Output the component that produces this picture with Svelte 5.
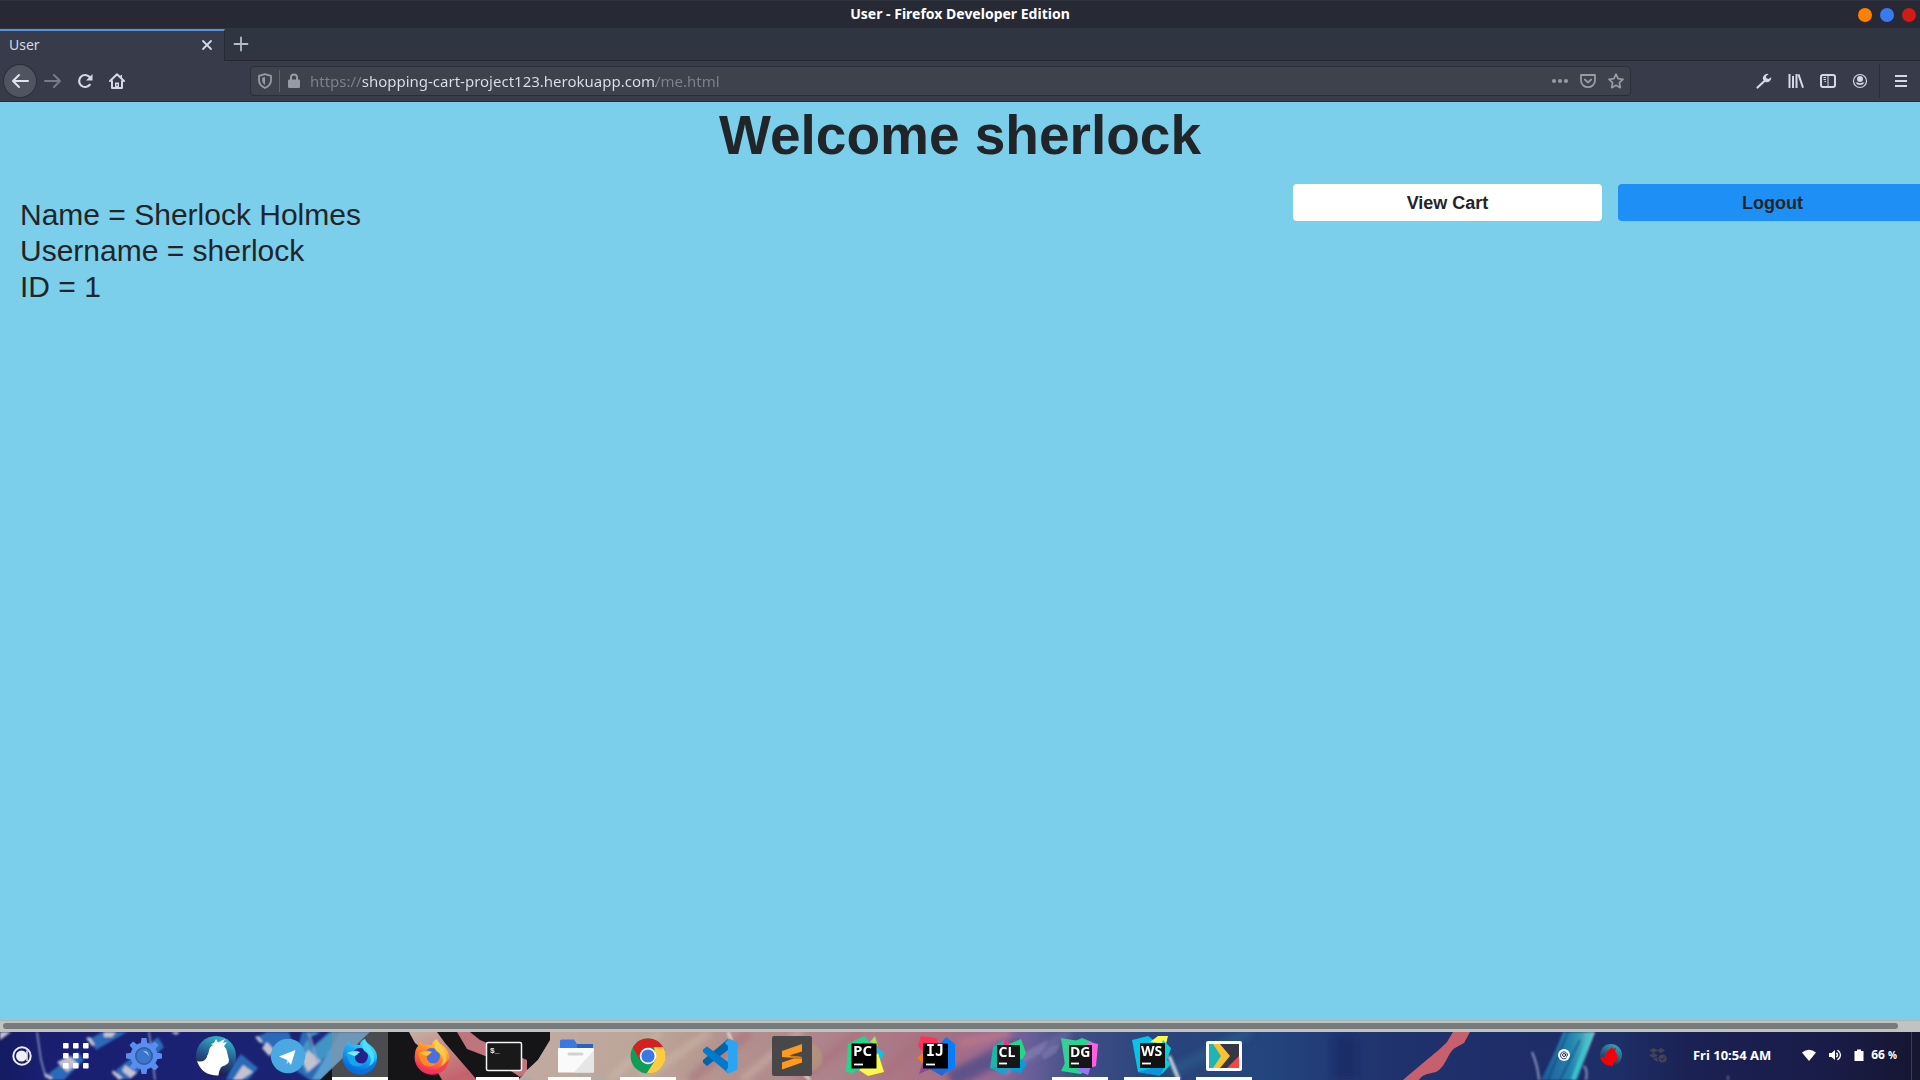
<script>
  let url = $state('https://shopping-cart-project123.herokuapp.com/me.html');

  const user = { name: 'Sherlock Holmes', username: 'sherlock', id: 1 };

  const apps = [
    { id: 'settings', label: 'Settings' },
    { id: 'duck', label: 'Cyberduck' },
    { id: 'telegram', label: 'Telegram' },
    { id: 'firefox-dev', label: 'Firefox Developer Edition', active: true, running: 'one' },
    { id: 'firefox', label: 'Firefox' },
    { id: 'terminal', label: 'Terminal', running: 'many' },
    { id: 'files', label: 'Files', running: 'many' },
    { id: 'chrome', label: 'Chrome', running: 'one' },
    { id: 'code', label: 'Visual Studio Code' },
    { id: 'sublime', label: 'Sublime Text' },
    { id: 'pycharm', label: 'PyCharm' },
    { id: 'idea', label: 'IntelliJ IDEA' },
    { id: 'clion', label: 'CLion' },
    { id: 'datagrip', label: 'DataGrip', running: 'one' },
    { id: 'webstorm', label: 'WebStorm', running: 'one' },
    { id: 'player', label: 'Player', running: 'one' }
  ];
</script>

<div class="screen">
  <header class="titlebar">
    <span class="window-title">User - Firefox Developer Edition</span>
    <div class="window-buttons">
      <button class="dot orange" aria-label="Minimize"></button>
      <button class="dot blue" aria-label="Maximize"></button>
      <button class="dot red" aria-label="Close window"></button>
    </div>
  </header>

  <div class="tabs">
    <div class="tab">
      <span>User</span>
      <button class="icon close" aria-label="Close tab">
        <svg width="12" height="12" viewBox="0 0 12 12"><path d="M2 2l8 8M10 2l-8 8" stroke="#d3dae3" stroke-width="1.8" stroke-linecap="round" /></svg>
      </button>
    </div>
    <button class="icon new-tab" aria-label="New tab">
      <svg width="16" height="16" viewBox="0 0 16 16"><path d="M8 1.5v13M1.5 8h13" stroke="#b4bccb" stroke-width="1.8" stroke-linecap="round" /></svg>
    </button>
  </div>

  <nav class="toolbar" aria-label="Browser toolbar">
    <div class="nav-left">
      <button class="icon back" aria-label="Back">
        <svg width="18" height="16" viewBox="0 0 18 16"><path d="M8 2L2 8l6 6M2 8h15" fill="none" stroke="#dfe3ec" stroke-width="2" stroke-linecap="round" stroke-linejoin="round" /></svg>
      </button>
      <button class="icon" aria-label="Forward">
        <svg width="18" height="16" viewBox="0 0 18 16"><path d="M10 2l6 6-6 6M16 8H1" fill="none" stroke="#767b89" stroke-width="2" stroke-linecap="round" stroke-linejoin="round" /></svg>
      </button>
      <button class="icon" aria-label="Reload">
        <svg width="16" height="16" viewBox="0 0 16 16"><path d="M12.8 11.8A6 6 0 1 1 12.6 4" fill="none" stroke="#d3dae3" stroke-width="2.2" stroke-linecap="round" /><path d="M15.5 1v6.5H9z" fill="#d3dae3" /></svg>
      </button>
      <button class="icon" aria-label="Home">
        <svg width="16" height="16" viewBox="0 0 16 16"><path d="M1 8l7-6.8L15 8M3 8v7h10V8" fill="none" stroke="#d3dae3" stroke-width="2" stroke-linecap="round" stroke-linejoin="round" /><path d="M6 15v-5.5h4V15" fill="#d3dae3" /><path d="M8 11v2" stroke="#383c4a" /><path d="M11.5 2h1.5v3h-1.5z" fill="#d3dae3" /></svg>
      </button>
    </div>

    <div class="urlbar">
      <svg width="14" height="16" viewBox="0 0 14 16"><path d="M7 1.2L13 2.8V7c0 4-2.5 6.500-6 8C3.500 13.500 1 11 1 7V2.800z" fill="none" stroke="#969ba6" stroke-width="1.800" stroke-linejoin="round" /><path d="M7 4L4.200 4.800V7c0 2 1 3.800 2.800 5z" fill="#969ba6" /></svg>
      <span class="split"></span>
      <svg class="lock" width="12" height="16" viewBox="0 0 12 16"><path d="M3 7V4.500a3 3 0 0 1 6 0V7" fill="none" stroke="#969ba6" stroke-width="2" /><rect y="6.500" width="12" height="8.500" rx="1.200" fill="#969ba6" /></svg>
      <input type="text" aria-label="Address" bind:value={url} spellcheck="false" />
      <div class="url-actions">
        <button class="icon" aria-label="Page actions">
          <svg width="16" height="16" viewBox="0 0 16 16" fill="#969ba6"><circle cx="2" cy="8" r="2" /><circle cx="8" cy="8" r="2" /><circle cx="14" cy="8" r="2" /></svg>
        </button>
        <button class="icon" aria-label="Save to Pocket">
          <svg width="16" height="16" viewBox="0 0 16 16" fill="none" stroke="#969ba6" stroke-width="1.800" stroke-linecap="round" stroke-linejoin="round"><path d="M1 2h14v5.500a7 6.700 0 0 1-14 0z" /><path d="M4.800 6.500L8 9.500l3.200-3" /></svg>
        </button>
        <button class="icon" aria-label="Bookmark page">
          <svg width="16" height="16" viewBox="0 0 16 16"><path d="M8 1.200l2.100 4.500 4.900.600-3.600 3.400.9 5L8 12.300 3.700 14.700l.9-5L1 6.300l4.900-.6z" fill="none" stroke="#969ba6" stroke-width="1.700" stroke-linejoin="round" /></svg>
        </button>
      </div>
    </div>

    <div class="nav-right">
      <button class="icon" aria-label="Developer tools">
        <svg width="16" height="16" viewBox="0 0 16 16"><path d="M1.500 14.500l7.500-7" stroke="#d3dae3" stroke-width="2.200" stroke-linecap="round" /><path d="M12.500 1A4.500 4.500 0 0 0 7 6.500L9.500 9a4.500 4.500 0 0 0 5.800-4.800L12.500 6 10.300 5.300 10 3.200z" fill="#d3dae3" /></svg>
      </button>
      <button class="icon" aria-label="Library">
        <svg width="16" height="16" viewBox="0 0 16 16" stroke="#d3dae3" stroke-width="2"><path d="M1.500 1v14M8.500 1v14M10.500 1.400l4.500 13.300" /><path d="M5 3v12" /></svg>
      </button>
      <button class="icon" aria-label="Sidebars">
        <svg width="16" height="16" viewBox="0 0 16 16"><rect x="1" y="2" width="14" height="12" rx="2" fill="none" stroke="#d3dae3" stroke-width="2" /><path d="M8 2v12" stroke="#d3dae3" /><path d="M3.500 4.500H6M3.500 6.500H6M4.500 8.500H6" stroke="#d3dae3" /></svg>
      </button>
      <button class="icon" aria-label="Account">
        <svg width="16" height="16" viewBox="0 0 16 16"><circle cx="8" cy="8" r="6.500" fill="none" stroke="#d3dae3" stroke-width="1.200" /><circle cx="8" cy="6" r="3" fill="#d3dae3" /><path d="M3.500 9.500h2.200a4 4 0 0 0 4.600 0h2.200a5 4.500 0 0 1-9 0z" fill="#d3dae3" /></svg>
      </button>
      <span class="bar-line"></span>
      <button class="icon" aria-label="Menu">
        <svg width="12" height="16" viewBox="0 0 12 16"><path d="M0 3h12M0 8h12M0 13h12" stroke="#d3dae3" stroke-width="2" /></svg>
      </button>
    </div>
  </nav>

  <main class="page">
    <h1>Welcome sherlock</h1>
    <div class="page-row">
      <section class="details">
        <div>Name = {user.name}</div>
        <div>Username = {user.username}</div>
        <div>ID = {user.id}</div>
      </section>
      <div class="actions">
        <button class="action cart">View Cart</button>
        <button class="action logout">Logout</button>
      </div>
    </div>
  </main>

  <div class="scroll"><div class="thumb"></div></div>

  <footer class="taskbar">
    <svg class="wallpaper" viewBox="0 0 1920 48" preserveAspectRatio="none" aria-hidden="true">
      <defs>
        <linearGradient id="sky" gradientUnits="userSpaceOnUse" x1="0" y1="0" x2="1920" y2="0">
          <stop offset="0" stop-color="#151b60" /><stop offset=".02" stop-color="#191e70" /><stop offset=".17" stop-color="#1b2474" />
          <stop offset=".28" stop-color="#bfaaa0" /><stop offset=".34" stop-color="#bca498" /><stop offset=".38" stop-color="#b4928f" />
          <stop offset=".44" stop-color="#ad808a" /><stop offset=".49" stop-color="#aa7082" /><stop offset=".515" stop-color="#9a6a92" />
          <stop offset=".535" stop-color="#6c609a" /><stop offset=".56" stop-color="#414f86" /><stop offset=".6" stop-color="#2b447c" />
          <stop offset=".66" stop-color="#23457e" /><stop offset=".72" stop-color="#20336e" /><stop offset=".8" stop-color="#1e2c68" />
          <stop offset=".84" stop-color="#1e2f68" /><stop offset=".88" stop-color="#1b2153" /><stop offset=".95" stop-color="#191c48" /><stop offset="1" stop-color="#161631" />
        </linearGradient>
        <linearGradient id="ribbon" x1="0" y1="0" x2=".6" y2="1"><stop offset="0" stop-color="#c5b1a4" /><stop offset=".5" stop-color="#c48b88" /><stop offset="1" stop-color="#c4636d" /></linearGradient>
        <linearGradient id="teal" x1="0" y1="0" x2="1" y2="0"><stop offset="0" stop-color="#1d5a9a" /><stop offset=".55" stop-color="#2384ae" /><stop offset=".75" stop-color="#3aa0b8" /><stop offset="1" stop-color="#a9cfc8" /></linearGradient>
        <filter id="soft" x="-5%" y="-20%" width="110%" height="140%"><feGaussianBlur stdDeviation=".8" /></filter>
        <filter id="haze" x="-5%" y="-50%" width="110%" height="200%"><feGaussianBlur stdDeviation="3" /></filter>
      </defs>
      <rect width="1920" height="48" fill="url(#sky)" />

      <g filter="url(#soft)">
        <g fill="#2a6ab8">
          <path d="M49 41L78 20l6 8-20 20H52zM90 7l12-7h25L96 18zM116 38l42-33 6 10-34 32h-10zM233 32l8-10 17 14-10 12h-22zM257 5l10-5h22l6 20-18 8zM302 0h72L322 48h-12l-18-12z" />
        </g>
        <path d="M312 0h40l-46 42-8-20z" fill="#3f94c6" />
        <path d="M340 0h30L320 48h-8z" fill="#5a9dcf" />
        <path d="M308 6l12-6h10l-18 16z" fill="#1f2b84" />
        <g fill="#c3c3d0">
          <path d="M0 0h11L0 8zM44 40l9 6-3 2-6-5zM57 30l13-6 8 8-11 8zM86 6l4-1 5 8-3 1zM104 0h12l-4 5h-8zM113 38l10 8-4 2-7-7zM125 33l12 8-6 5-9-7zM171 0h9l-4 3zM243 33l10 7-12 8h-8zM255 5l3-1 5 6-3 1zM267 10l8 9-6 5-7-8zM308 18l13 11-13 11-6-12z" />
        </g>
        <path d="M37 0l4 28 5 18M149 0l6 48M308 0l10 30" fill="none" stroke="#8f9cc4" stroke-width="1.500" />
      </g>

      <path d="M370 0h180v8l-12 20-20 20H320z" fill="#151517" />
      <path d="M409 0h28l8 11 32 37h-35l-15-27-12-10z" fill="url(#ribbon)" />
      <path d="M457 0h13l10 8 47 20v12l-7 5-27-18-26-10z" fill="#c0747c" />
      <path d="M550 0v9l-12 19-11 10-8 10h60V0z" fill="#c0aaa0" />
      <g filter="url(#haze)" fill="none">
        <path d="M610 48l50-48M640 48l70-48M742 48l60-50" stroke="#d2bfae" stroke-width="7" opacity=".5" />
        <path d="M690 48l60-48M800 48l60-48M880 48l50-48" stroke="#a96f7c" stroke-width="10" opacity=".6" />
        <path d="M950 48l70-34" stroke="#4a4a88" stroke-width="18" opacity=".75" />
        <path d="M960 12l50-12" stroke="#c07a86" stroke-width="10" opacity=".7" />
        <path d="M1000 44l70-44" stroke="#8079b0" stroke-width="7" opacity=".5" />
        <path d="M1170 40l80-40" stroke="#2d6792" stroke-width="12" opacity=".4" />
        <path d="M1345 4v44" stroke="#192560" stroke-width="24" opacity=".5" />
      </g>
      <g filter="url(#soft)">
        <path d="M1002 36l10-5 8-8 12-7 16-8-6 12-18 10-18 14zM1042 22l10-8 8-2-4 9-12 7z" fill="#8e87bd" opacity=".45" />
        <path d="M806 10q14 2 16 14t-12 16z" fill="#b2997c" opacity=".7" />
        <path d="M728 0l4 10M804 42l6 6" stroke="#ded0d0" stroke-width="3" />
        <path d="M1169 24l10 24" stroke="#b9c6d4" stroke-width="4" />
      </g>
      <path d="M1403 48c22-19 39-32 44-38l6-10h17l-6 11-9 5c-7 4-9 19-19 24-10 2-14 3-17 8z" fill="#c65f6e" />
      <g filter="url(#soft)">
        <path d="M1541 48c10-20 16-32 22-48h32l-18 48z" fill="url(#teal)" />
        <path d="M1573 48l18-48" stroke="#39c6d0" stroke-width="4" />
        <path d="M1548 48l20-48M1560 48l20-40" stroke="#174a88" stroke-width="2" opacity=".7" />
        <path d="M1532 20q6 14 7 28M1586 48q2-10-2-14" fill="none" stroke="#8b93b8" stroke-width="2" />
        <path d="M1728 44v4" stroke="#a6a8c4" stroke-width="1" />
      </g>
    </svg>

    <div class="launchers">
      <button class="icon start" aria-label="Activities">
        <svg width="20" height="20" viewBox="0 0 20 20" fill="none" stroke="#f1f1f4"><circle cx="10" cy="10" r="8.700" stroke-width="2" /><circle cx="9.500" cy="10" r="5.500" fill="#f1f1f4" stroke="none" /><path d="M15 4.500v10.500" stroke-width="1.500" /></svg>
      </button>
      <button class="icon grid-btn" aria-label="Show applications">
        <svg width="26" height="26" viewBox="0 0 26 26" fill="#fff">
          {#each [0, 10, 20] as y}{#each [0, 10, 20] as x}<rect {x} {y} width="5.600" height="5.600" rx=".8" />{/each}{/each}
        </svg>
      </button>
    </div>

    <div class="apps">
      {#each apps as app}
        <button class="app" class:active={app.active} aria-label={app.label}>
          <svg width="40" height="40" viewBox="0 0 40 40">
            {#if app.id === 'settings'}
              <g fill="#5b8def">
                {#each [0, 45, 90, 135, 180, 225, 270, 315] as a}<path d="M16.800 7L17.500 2h5l.7 5z" transform="rotate({a} 20 20)" />{/each}
                <circle cx="20" cy="20" r="13.500" />
              </g>
              <circle cx="20" cy="20" r="9" fill="#2c5ca8" /><circle cx="20" cy="20" r="7.500" fill="#3a77cc" /><path d="M19 15.500q5-1 6 5-2-4-6-5z" fill="#b9dcf5" />
            {:else if app.id === 'duck'}
              <defs><linearGradient id="dk" x1=".6" y1="0" x2=".3" y2="1"><stop offset="0" stop-color="#33b8cc" /><stop offset=".5" stop-color="#24558a" /><stop offset="1" stop-color="#200f35" /></linearGradient></defs>
              <circle cx="20" cy="20" r="20" fill="url(#dk)" />
              <path d="M1 25q7 2 10-4c0-2 1-2 1.500-4Q13 11 17 9l-2-1 3-1 2-4 2 3.500L29 3l-2 4 4-1-3 4q3 3 3 6l2 8q0 3-2 4-2 2-4 2-4 2-4.500 9.500Q6 40 1 25z" fill="#fff" />
            {:else if app.id === 'telegram'}
              <circle cx="20" cy="20" r="17.300" fill="#4aa8e2" /><path d="M11 20.500L27.500 14 23 29l-4-5z" fill="#fff" /><path d="M19 24l-.5 4.500 2-2.500z" fill="#c7dcea" />
            {:else if app.id === 'firefox-dev' || app.id === 'firefox'}
              {@const dev = app.id === 'firefox-dev'}
              <defs>
                <linearGradient id="{app.id}-b" x1=".8" y1="0" x2=".3" y2="1"><stop offset="0" stop-color={dev ? '#4ff0ff' : '#ffe14a'} /><stop offset=".45" stop-color={dev ? '#1ba8f5' : '#ff8a2b'} /><stop offset="1" stop-color={dev ? '#0560d8' : '#f0245e'} /></linearGradient>
              </defs>
              <path d="M6 10c1-1 1-3 2-5l4 4c3-1 6 0 8 0 0-3 2-5 5-6 1 5 8 6 11 13 4 11-4 22-16 22C8 38 1 28 3 18c0-3 1-6 3-8z" fill="url(#{app.id}-b)" />
              <circle cx="20" cy="20" r="8" fill={dev ? '#26208a' : '#4a6fe0'} />
              <path d="M6 17c4-3 9-3 14-1-2 1-3 3-5 4-1 5 4 9 10 7-5 6-15 4-17-4z" fill={dev ? '#15a5f0' : '#ff8a1f'} />
              <path d="M7 17c4-2 9-2 13-1-2 1-3 4-6 4z" fill={dev ? '#7beaff' : '#ffbd3d'} />
              <path d="M25 3c1 6 8 9 9 16 1 5-1 9-5 11 4-6 1-11-2-13-4-2-7-7-2-14z" fill={dev ? '#4be4fb' : '#ffd242'} opacity=".85" />
              <path d="M4 25c5 10 22 14 33-2-2 21-30 21-33 2z" fill={dev ? '#0a6cd6' : '#f22f5c'} opacity=".7" />
            {:else if app.id === 'terminal'}
              <rect x="2.500" y="6.500" width="35" height="28" rx="1.500" fill="#191919" stroke="#f4f4f4" stroke-width="1.500" />
              <text x="6" y="17" class="prompt">$_</text>
            {:else if app.id === 'files'}
              <path d="M4 5q0-1.500 1.500-1.500H18l3 4.500h16v6H4z" fill="#3b78e7" /><path d="M21 8h16v5H21z" fill="#2a62c4" />
              <rect x="2" y="12" width="36" height="24.500" rx="1" fill="#fafafa" /><path d="M38 14v22.500H18z" fill="#e6e6e6" /><rect x="11.500" y="16.500" width="16" height="3" rx="1.500" fill="#d2d2d2" />
            {:else if app.id === 'chrome'}
              <circle cx="20" cy="20" r="17.500" fill="#0f9d58" />
              <path d="M4.800 11.300A17.500 17.500 0 0 1 35.200 11.300H20L12 24z" fill="#d81f1f" />
              <path d="M35.200 11.300A17.500 17.500 0 0 1 18.500 37.500L28 23 26 11.300z" fill="#ffcb42" />
              <circle cx="20" cy="20" r="8.300" fill="#fff" /><circle cx="20" cy="20" r="6.600" fill="#3b78e7" />
            {:else if app.id === 'code'}
              <path d="M28 3v11L7 30l-4-3.500V24z" fill="#0065a9" /><path d="M28 37V26L7 10.500 3 13.500V16z" fill="#007acc" />
              <path d="M29 2.500l8.500 4v27L29 37.500l-3-3 2-3V10l-3-3z" fill="#2aa5f3" />
            {:else if app.id === 'sublime'}
              <rect width="40" height="40" rx="2" fill="#484848" />
              <path d="M10 15l20-7v7.500l-13 4 13 1.500v5.500L10 33.500v-7l13-4.500-13-1z" fill="#ff9a1f" /><path d="M17 19.500l13 1.500v2l-7 0z" fill="#d97708" />
            {:else if app.id === 'pycharm'}
              <path d="M4 8l16-8 8 8-12 26-14 2z" fill="#21d789" /><path d="M26 6l5-6 3 10z" fill="#a7e35a" /><path d="M31 10l9 7-4 8z" fill="#07c3f2" /><path d="M34 17l6 19-16 4-9-6z" fill="#fcf84a" /><path d="M0 34l8 4 6-5z" fill="#21d789" />
              <rect x="7.500" y="7.500" width="25" height="25" /><text x="9" y="20" class="ide">PC</text><path d="M10 28.500h9" stroke="#fff" stroke-width="1.800" />
            {:else if app.id === 'idea'}
              <path d="M5 0l15 2 4 8-16 8-6-8z" fill="#fe315d" /><path d="M1 22l7-6v12z" fill="#f97a12" /><path d="M24 8l6-7 9 7v24l-13 7-10-5z" fill="#087cfa" /><path d="M7 26L3 38l14-6z" fill="#8e479b" /><path d="M12 32l14 8 6-8z" fill="#2567d8" />
              <rect x="7" y="7.500" width="25" height="25" /><text x="10" y="20" class="ide mono">IJ</text><path d="M10 28.500h9" stroke="#fff" stroke-width="1.800" />
            {:else if app.id === 'clion'}
              <path d="M5 11l12-8 8 8-10 26L2 32z" fill="#17b8a6" /><path d="M16 3l6 4-2 5h-4z" fill="#ed358c" /><path d="M21 8l12-5 5 14-6 10z" fill="#21d789" /><path d="M31 22l8 5-6 10-12-3z" fill="#079ed8" /><path d="M3 31l12 8 8-8z" fill="#1aa2c9" />
              <rect x="9" y="9" width="23" height="23" fill="#161616" /><text x="10.500" y="20.500" class="ide small">CL</text><path d="M11 27.500h8" stroke="#fff" stroke-width="1.800" />
            {:else if app.id === 'datagrip'}
              <path d="M1 2l18 3 2 26-16-2z" fill="#33cf96" /><path d="M8 8l14-6 10 4-4 8z" fill="#22d88f" /><path d="M30 6l8 2-2 22-6 2-10-20z" fill="#ff5fe3" /><path d="M5 27l-4 8 20 3 8-8z" fill="#22d88f" /><path d="M16 34l12 5 4-12z" fill="#9775f8" />
              <rect x="9" y="9" width="23" height="23" fill="#161616" /><text x="10" y="20.500" class="ide small">DG</text><path d="M11 27.500h8" stroke="#fff" stroke-width="1.800" />
            {:else if app.id === 'webstorm'}
              <path d="M0 4l16-4 8 6-6 32-12-2z" fill="#07c3e8" /><path d="M18 6l8-6h10l-2 8z" fill="#fcf84a" /><path d="M31 4l8 8-4 12 4 4-9 10-8-8z" fill="#08cdd7" /><path d="M6 36l22 4 6-12z" fill="#0a94dc" />
              <rect x="8" y="7" width="25" height="25" fill="#111" /><text x="9" y="20" class="ide small">WS</text><path d="M10 27.500h9" stroke="#fff" stroke-width="1.800" />
            {:else}
              <rect x="2" y="5" width="36" height="30" rx="2" fill="#fff" /><path d="M5 8h9l7 12-7 12H5z" fill="#1fb5b8" /><path d="M14 8h21v24H14l7-12z" fill="#343746" /><path d="M35 20v12H23z" fill="#fa4343" /><path d="M9 8h7l10 12-10 12H9l8-12z" fill="#fcc12f" />
            {/if}
          </svg>
          {#if app.running}<span class="marks"><i></i>{#if app.running === 'many'}<i class="more"></i>{/if}</span>{/if}
        </button>
      {/each}
    </div>

    <div class="tray">
      <svg width="12" height="12" viewBox="0 0 12 12"><circle cx="6" cy="6" r="6" fill="#fff" /><path d="M8.500 8.800A3.500 3.500 0 1 1 9.500 6c0 1.600-1.800 1.800-1.800.4V4.500" fill="none" stroke="#26385a" /><circle cx="6" cy="6" r="1.500" fill="none" stroke="#26385a" /></svg>
      <svg class="bird" width="22" height="22" viewBox="0 0 22 22">
        <defs><linearGradient id="bd" x1=".7" y1="0" x2=".2" y2="1"><stop offset="0" stop-color="#31a3ba" /><stop offset="1" stop-color="#1c1a44" /></linearGradient></defs>
        <circle cx="11" cy="11" r="11" fill="url(#bd)" /><path d="M0 13q4 1 5.500-1Q6 7 9 6l3-3 1 2 3-1-1 3 2 4q1 4 0 5-1 2-3 2-1 1-1 4Q2 22 0 13z" fill="#f60008" />
      </svg>
      <svg class="box" width="18" height="16" viewBox="0 0 18 16" fill="#424456"><path d="M4.500 1L9 3.500 4.500 6 0 3.500zM12 1l4 2.500L12 6 8 3.500zM4.500 6L9 8.500 4.500 11 0 8.500z" /><path d="M4 12l4-2 1 5z" /><circle cx="13.500" cy="11.500" r="4" /><path d="M11.500 11.500l1.500 1.500 2.500-3" stroke="#1b1f4c" fill="none" /></svg>
      <time>Fri 10:54 AM</time>
      <svg class="wifi" width="14" height="12" viewBox="0 0 14 12"><path d="M0 3.500Q7-2 14 3.500L7 12z" fill="#fff" /></svg>
      <svg class="sound" width="14" height="12" viewBox="0 0 14 12"><path d="M1 4h2.500L7 1v10L3.500 8H1z" fill="#fff" /><path d="M8.500 3.800q2 2.200 0 4.400M9.500 1q6 5 0 10" fill="none" stroke="#fff" stroke-width="1.400" /></svg>
      <svg class="battery" width="10" height="12" viewBox="0 0 10 12"><path d="M.5 2H3V.5h4V2h2.500v10h-9z" fill="#fff" /></svg>
      <span class="percent">66<small>%</small></span>
    </div>
  </footer>
</div>

<style>
  :global(body) { margin: 0; overflow: hidden; }
  .screen {
    display: grid;
    grid-template-rows: auto auto auto 1fr auto auto;
    height: 100vh;
    overflow: hidden;
    font-family: "Noto Sans", sans-serif;
    color: #d3dae3;
  }
  button { border: 0; padding: 0; background: none; color: inherit; font: inherit; }
  svg { display: block; flex: none; }
  .icon { display: flex; align-items: center; justify-content: center; width: 32px; height: 32px; flex: none; }

  .titlebar {
    display: grid;
    grid-template-columns: 1fr auto 1fr;
    align-items: center;
    height: 28px;
    box-sizing: border-box;
    border-top: 1px solid #303340;
    background: #272934;
  }
  .window-title { grid-column: 2; padding-bottom: 2px; font-size: 14px; font-weight: 700; line-height: 20px; color: #fff; }
  .window-buttons { display: flex; gap: 8px; justify-content: flex-end; padding-right: 4px; }
  .dot { width: 14px; height: 14px; border-radius: 50%; }
  .orange { background: #ff7f00; }
  .blue { background: #377bf0; }
  .red { background: #d41919; }

  .tabs { display: flex; height: 33px; background: #303641; box-shadow: inset 0 -1px #252832; }
  .tab {
    display: flex;
    align-items: center;
    justify-content: space-between;
    width: 225px;
    box-sizing: border-box;
    padding: 0 1px 2px 9px;
    border-top: 2px solid #5294e2;
    border-right: 1px solid #262a33;
    margin-top: 1px;
    background: #383c4a;
    font-size: 14px;
    line-height: 20px;
  }

  .toolbar {
    display: flex;
    align-items: center;
    height: 41px;
    box-sizing: border-box;
    border-bottom: 1px solid #292b38;
    background: #383c4a;
  }
  .nav-left { display: flex; width: 250px; padding-left: 4px; box-sizing: border-box; }
  .back { border-radius: 50%; background: #505461; box-shadow: 0 0 0 1px #2b2e3b; }
  .nav-left .back + .icon { margin-left: 1px; }
  .urlbar {
    display: flex;
    align-items: center;
    flex: 1;
    min-width: 0;
    height: 30px;
    box-sizing: border-box;
    padding-left: 7px;
    border: 1px solid #2b2e39;
    border-radius: 4px;
    background: #3e424d;
  }
  .split { width: 1px; height: 22px; margin: 0 8px 0 7px; background: #5f636e; }
  .urlbar input {
    flex: 1;
    min-width: 0;
    height: 24px;
    padding: 0;
    margin-left: 10px;
    border: 0;
    outline: 0;
    font-family: "Noto Sans", sans-serif;
    font-size: 15px;
    color: transparent;
    caret-color: #d3dae3;
    /* dims the scheme and the path, leaving the host bright */
    background: linear-gradient(90deg, #7e828d 52px, #dde1e9 52px 346px, #7e828d 346px);
    background-clip: text;
    -webkit-background-clip: text;
  }
  .url-actions { display: flex; }
  .url-actions .icon { width: 28px; height: 28px; }
  .nav-right { display: flex; align-items: center; justify-content: flex-end; width: 289px; padding-right: 3px; box-sizing: border-box; }
  .bar-line { width: 1px; height: 34px; margin: 0 5px 0 3px; background: #2b2e39; }

  .page { overflow: hidden; background: #7ccfea; color: #212529; font-family: "Liberation Sans", Arial, sans-serif; }
  h1 { margin: 0 0 16px; font-size: 55px; line-height: 66px; font-weight: 700; text-align: center; }
  .page-row { display: flex; justify-content: space-between; align-items: flex-start; margin-right: -7px; }
  .details { padding: 13px 20px; font-size: 30px; line-height: 36px; }
  .actions { display: flex; gap: 16px; }
  .action { width: 309px; height: 37px; padding-top: 2px; border-radius: 4px; font-size: 18px; font-weight: 700; }
  .cart { background: #fff; }
  .logout { background: #1e90f5; }

  .scroll { height: 12px; box-sizing: border-box; padding: 2px 22px 0 3px; border-top: 1px solid #b2b3b3; background: #c1c2c2; }
  .thumb { height: 6px; border-radius: 3px; background: #787b7c; }

  .taskbar { position: relative; display: flex; height: 48px; color: #fff; }
  .wallpaper { position: absolute; inset: 0; width: 100%; height: 100%; }
  .launchers, .apps, .tray { position: relative; display: flex; }
  .launchers { align-items: center; width: 116px; }
  .start { width: 44px; }
  .grid-btn { width: 64px; }
  .apps { gap: 16px; }
  .app { position: relative; display: flex; flex-direction: column; align-items: center; width: 56px; padding-top: 4px; }
  .active { background: rgba(140, 145, 150, .45); }
  .marks { position: absolute; inset: auto 0 0; display: flex; gap: 2px; height: 3px; }
  .marks i { flex: 1; background: #fff; }
  .marks .more { flex: none; width: 11px; background: #a9adb0; }
  .prompt { font: 700 8px "Liberation Mono", monospace; fill: #eee; }
  .ide { font: 700 15px "Open Sans", sans-serif; fill: #fff; }
  .ide.small { font-size: 14px; }
  .ide.mono { font-family: "DejaVu Sans Mono", monospace; }
  .tray {
    align-items: center;
    margin-left: auto;
    margin-right: 8px;
    padding: 0 14px 2px 0;
    border-right: 1px solid #3a3a58;
    font-size: 13px;
    font-weight: 700;
    line-height: 20px;
  }
  .bird { margin-left: 30px; }
  .box { margin-left: 27px; }
  time { margin-left: 26px; white-space: nowrap; }
  .wifi { margin-left: 31px; }
  .sound { margin-left: 12px; }
  .battery { margin-left: 12px; }
  .percent { margin-left: 7px; font-size: 12px; }
  small { margin-left: 3px; font-size: 10px; }
</style>
